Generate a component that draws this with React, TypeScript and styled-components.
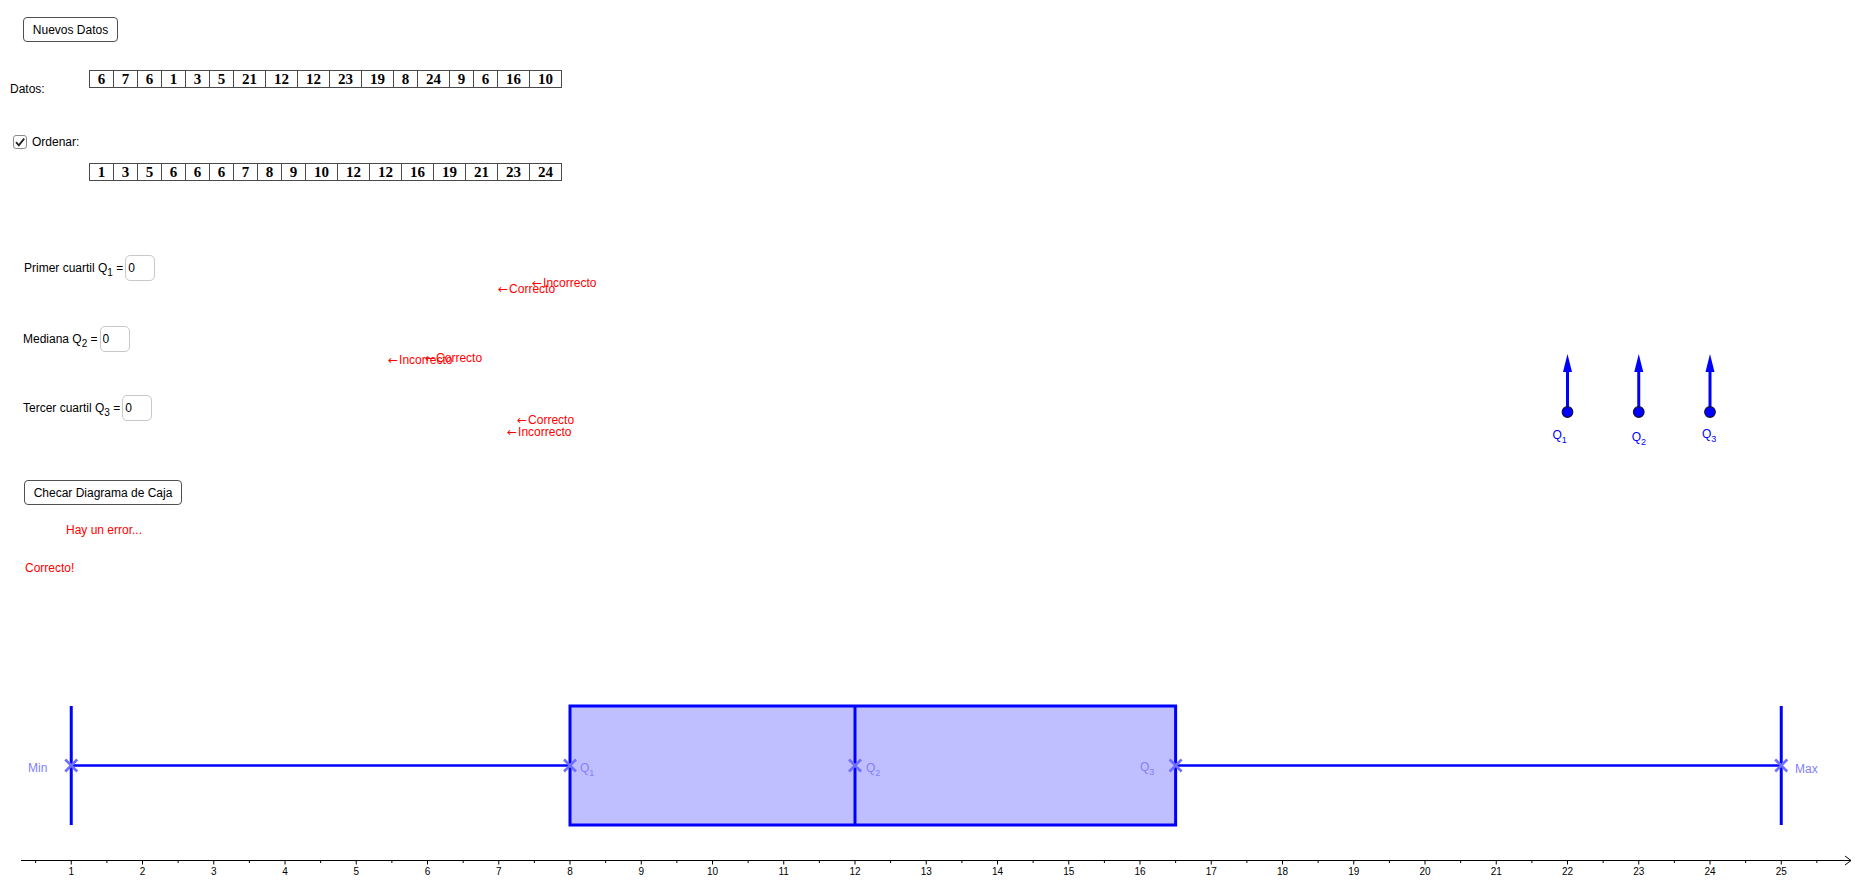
import React from "react";
import styled, { createGlobalStyle } from "styled-components";

const GlobalStyle = createGlobalStyle`
  html, body { margin: 0; padding: 0; background: #fff; }
  body {
    font-family: "Liberation Sans", Arial, sans-serif;
    font-size: 12px;
    color: #000;
    overflow: hidden;
  }
`;

const Canvas = styled.div`
  position: relative;
  width: 1855px;
  height: 886px;
  overflow: hidden;
  background: #fff;
`;

const Graphics = styled.svg`
  position: absolute;
  left: 0;
  top: 0;
  width: 1855px;
  height: 886px;
  pointer-events: none;
`;

const Panel = styled.div`
  position: relative;
  z-index: 1;
  display: flex;
  flex-direction: column;
  align-items: flex-start;
`;

const Row = styled.div<{ $top: number; $left: number; $align?: string }>`
  display: flex;
  align-items: ${(p) => p.$align || "center"};
  margin-top: ${(p) => p.$top}px;
  margin-left: ${(p) => p.$left}px;
`;

const GgbButton = styled.button<{ $w: number }>`
  width: ${(p) => p.$w}px;
  height: 25px;
  padding: 0;
  box-sizing: border-box;
  background: #fff;
  border: 1px solid #505050;
  border-radius: 4px;
  font: 12px "Liberation Sans", Arial, sans-serif;
  color: #000;
  cursor: pointer;
`;

const DatosLabel = styled.span`
  width: 79px;
  margin-top: 12px;
  line-height: 14px;
`;

const Strip = styled.div`
  display: flex;
  height: 18px;
  box-sizing: border-box;
  border-top: 1px solid #4a4a4a;
  border-bottom: 1px solid #4a4a4a;
  border-left: 1px solid #4a4a4a;
`;

const Cell = styled.div<{ $wide: boolean }>`
  width: ${(p) => (p.$wide ? 32 : 24)}px;
  box-sizing: border-box;
  border-right: 1px solid #4a4a4a;
  display: flex;
  align-items: center;
  justify-content: center;
  font: bold 15px "Liberation Serif", "Times New Roman", serif;
  line-height: 16px;
`;

const CheckBox = styled.span`
  width: 14px;
  height: 14px;
  box-sizing: border-box;
  border: 1px solid #8a8a8a;
  border-radius: 3px;
  background: #fff;
  display: inline-flex;
  align-items: center;
  justify-content: center;
  margin-right: 5px;
`;

const Text = styled.span`
  line-height: 14px;
  white-space: pre;
`;

const Sub = styled.sub`
  font-size: 10px;
  line-height: 0;
  vertical-align: -4px;
`;

const AnswerBox = styled.input`
  width: 30px;
  height: 26px;
  box-sizing: border-box;
  margin: 0 0 0 2px;
  padding: 0 0 0 2px;
  border: 1px solid #c8c8c8;
  border-radius: 5px;
  background: #fff;
  font: 12px "Liberation Sans", Arial, sans-serif;
  color: #000;
  outline: none;
`;

const RedText = styled.span`
  color: #ff0000;
  line-height: 14px;
  white-space: nowrap;
`;

const Feedback = styled.span<{ $x: number; $y: number }>`
  position: absolute;
  z-index: 2;
  left: ${(p) => p.$x}px;
  top: ${(p) => p.$y}px;
  color: #ff0000;
  font-size: 12px;
  line-height: 14px;
  white-space: nowrap;
`;

const Arrow = styled.span`
  font-family: "DejaVu Sans", sans-serif;
  font-size: 12px;
  margin-right: 1px;
`;

const datos = [6, 7, 6, 1, 3, 5, 21, 12, 12, 23, 19, 8, 24, 9, 6, 16, 10];
const ordenados = [...datos].sort((a, b) => a - b);

const feedback = [
  { t: "Incorrecto", x: 532, y: 276 },
  { t: "Correcto", x: 498, y: 282 },
  { t: "Incorrecto", x: 388, y: 353 },
  { t: "Correcto", x: 425, y: 351 },
  { t: "Correcto", x: 517, y: 413 },
  { t: "Incorrecto", x: 507, y: 425 },
];

const K = 71.25;
const X = (v: number) => v * K;
const TOP = 706;
const BOT = 825;
const MID = 765.5;
const AXIS = 860.5;
const BLUE = "#0000ff";
const LIGHT = "rgb(128,128,255)";

const DataStrip: React.FC<{ values: number[] }> = ({ values }) => (
  <Strip>
    {values.map((v, i) => (
      <Cell key={i} $wide={v >= 10}>
        {v}
      </Cell>
    ))}
  </Strip>
);

const Cross: React.FC<{ x: number }> = ({ x }) => (
  <g stroke="rgb(110,110,255)" strokeWidth={2.6} strokeLinecap="butt">
    <line x1={x - 6} y1={MID - 6} x2={x + 6} y2={MID + 6} />
    <line x1={x - 6} y1={MID + 6} x2={x + 6} y2={MID - 6} />
  </g>
);

const QArrow: React.FC<{ x: number; n: number; lx: number; ly: number }> = ({ x, n, lx, ly }) => (
  <g>
    <line x1={x} y1={412} x2={x} y2={368} stroke={BLUE} strokeWidth={3} />
    <polygon points={`${x},354 ${x - 4.5},372 ${x + 4.5},372`} fill={BLUE} />
    <circle cx={x} cy={412} r={5.3} fill={BLUE} stroke="#101040" strokeWidth={1.2} />
    <text x={x + lx} y={ly} fill={BLUE} fontSize={12} fontFamily='"Liberation Sans", Arial, sans-serif'>
      Q<tspan dy={4} fontSize={9}>{n}</tspan>
    </text>
  </g>
);

const Chart: React.FC = () => {
  const majors = Array.from({ length: 25 }, (_, i) => i + 1);
  const minors = Array.from({ length: 26 }, (_, i) => i + 0.5);
  const font = '"Liberation Sans", Arial, sans-serif';
  return (
    <Graphics viewBox="0 0 1855 886">
      <rect
        x={X(8)}
        y={TOP}
        width={X(16.5) - X(8)}
        height={BOT - TOP}
        fill="rgb(191,191,255)"
        stroke={BLUE}
        strokeWidth={3}
      />
      <line x1={X(12)} y1={TOP} x2={X(12)} y2={BOT} stroke={BLUE} strokeWidth={3} />
      <line x1={X(1)} y1={TOP} x2={X(1)} y2={BOT} stroke={BLUE} strokeWidth={3} />
      <line x1={X(25)} y1={TOP} x2={X(25)} y2={BOT} stroke={BLUE} strokeWidth={3} />
      <line x1={X(1)} y1={MID} x2={X(8)} y2={MID} stroke={BLUE} strokeWidth={2.5} />
      <line x1={X(16.5)} y1={MID} x2={X(25)} y2={MID} stroke={BLUE} strokeWidth={2.5} />
      {[1, 8, 12, 16.5, 25].map((v) => (
        <Cross key={v} x={X(v)} />
      ))}
      <g fill={LIGHT} fontSize={12} fontFamily={font}>
        <text x={28} y={772}>Min</text>
        <text x={580} y={772}>
          Q<tspan dy={4} fontSize={9}>1</tspan>
        </text>
        <text x={866} y={772}>
          Q<tspan dy={4} fontSize={9}>2</tspan>
        </text>
        <text x={1140} y={771}>
          Q<tspan dy={4} fontSize={9}>3</tspan>
        </text>
        <text x={1795} y={773}>Max</text>
      </g>

      <line x1={21} y1={AXIS} x2={1851} y2={AXIS} stroke="#000" strokeWidth={1.2} />
      <polyline points={`1845,856 1851,${AXIS} 1845,865`} fill="none" stroke="#000" strokeWidth={1} />
      {majors.map((v) => (
        <line key={`M${v}`} x1={X(v)} y1={AXIS} x2={X(v)} y2={AXIS + 4} stroke="#000" strokeWidth={1} />
      ))}
      {minors.map((v) => (
        <line key={`m${v}`} x1={X(v)} y1={AXIS} x2={X(v)} y2={AXIS + 2.5} stroke="#000" strokeWidth={1} />
      ))}
      <g fill="#000" fontSize={10} fontFamily={font} textAnchor="middle">
        {majors.map((v) => (
          <text key={`t${v}`} x={X(v)} y={875}>
            {v}
          </text>
        ))}
      </g>

      <QArrow x={X(22)} n={1} lx={-15} ly={439} />
      <QArrow x={X(23)} n={2} lx={-7} ly={441} />
      <QArrow x={X(24)} n={3} lx={-8} ly={438} />
    </Graphics>
  );
};

export default function App() {
  return (
    <>
      <GlobalStyle />
      <Canvas>
        <Chart />
        <Panel>
          <Row $top={17} $left={23}>
            <GgbButton $w={95}>Nuevos Datos</GgbButton>
          </Row>
          <Row $top={28} $left={10} $align="flex-start">
            <DatosLabel>Datos:</DatosLabel>
            <DataStrip values={datos} />
          </Row>
          <Row $top={39} $left={13}>
            <CheckBox>
              <svg width="12" height="12" viewBox="0 0 12 12">
                <path d="M2 6.2 L4.8 9.3 L10.2 2.6" fill="none" stroke="#222" strokeWidth={1.8} />
              </svg>
            </CheckBox>
            <Text>Ordenar:</Text>
          </Row>
          <Row $top={14} $left={89}>
            <DataStrip values={ordenados} />
          </Row>
          <Row $top={74} $left={24}>
            <Text>
              Primer cuartil Q<Sub>1</Sub> =
            </Text>
            <AnswerBox defaultValue="0" />
          </Row>
          <Row $top={45} $left={23}>
            <Text>
              Mediana Q<Sub>2</Sub> =
            </Text>
            <AnswerBox defaultValue="0" />
          </Row>
          <Row $top={43} $left={23}>
            <Text>
              Tercer cuartil Q<Sub>3</Sub> =
            </Text>
            <AnswerBox defaultValue="0" />
          </Row>
          <Row $top={59} $left={24}>
            <GgbButton $w={158}>Checar Diagrama de Caja</GgbButton>
          </Row>
          <Row $top={18} $left={66}>
            <RedText>Hay un error...</RedText>
          </Row>
          <Row $top={24} $left={25}>
            <RedText>Correcto!</RedText>
          </Row>
        </Panel>
        {feedback.map((f, i) => (
          <Feedback key={i} $x={f.x} $y={f.y}>
            <Arrow>{"\u2190"}</Arrow>
            {f.t}
          </Feedback>
        ))}
      </Canvas>
    </>
  );
}
